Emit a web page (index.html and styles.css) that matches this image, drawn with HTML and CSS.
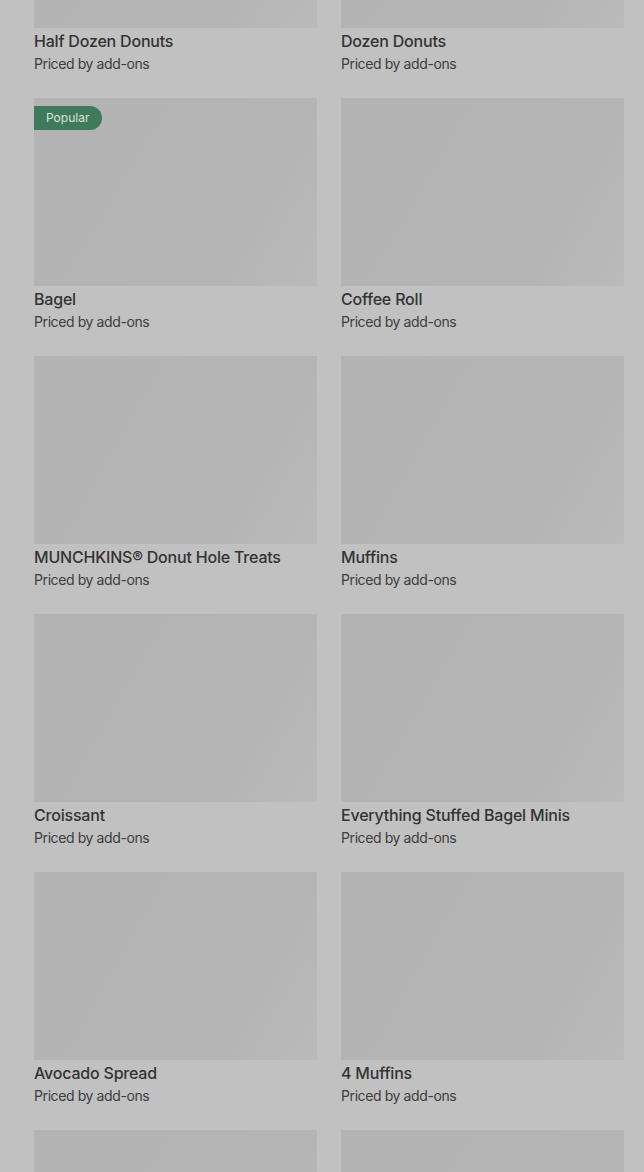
FILE: index.html
```html
<!DOCTYPE html>
<html>
<head>
  <title>Menu</title>
  <link rel="stylesheet" href="styles.css">
</head>
<body>
  <div class="menu">
    <div class="item">
      <div class="thumb"></div>
      <div class="name">Half Dozen Donuts</div>
      <div class="price">Priced by add-ons</div>
    </div>
    <div class="item">
      <div class="thumb"></div>
      <div class="name">Dozen Donuts</div>
      <div class="price">Priced by add-ons</div>
    </div>

    <div class="item">
      <div class="thumb"><span class="badge">Popular</span></div>
      <div class="name">Bagel</div>
      <div class="price">Priced by add-ons</div>
    </div>
    <div class="item">
      <div class="thumb"></div>
      <div class="name">Coffee Roll</div>
      <div class="price">Priced by add-ons</div>
    </div>

    <div class="item">
      <div class="thumb"></div>
      <div class="name">MUNCHKINS® Donut Hole Treats</div>
      <div class="price">Priced by add-ons</div>
    </div>
    <div class="item">
      <div class="thumb"></div>
      <div class="name">Muffins</div>
      <div class="price">Priced by add-ons</div>
    </div>

    <div class="item">
      <div class="thumb"></div>
      <div class="name">Croissant</div>
      <div class="price">Priced by add-ons</div>
    </div>
    <div class="item">
      <div class="thumb"></div>
      <div class="name">Everything Stuffed Bagel Minis</div>
      <div class="price">Priced by add-ons</div>
    </div>

    <div class="item">
      <div class="thumb"></div>
      <div class="name">Avocado Spread</div>
      <div class="price">Priced by add-ons</div>
    </div>
    <div class="item">
      <div class="thumb"></div>
      <div class="name">4 Muffins</div>
      <div class="price">Priced by add-ons</div>
    </div>

    <!-- next row, only the top of the pictures is in view -->
    <div class="item">
      <div class="thumb"></div>
    </div>
    <div class="item">
      <div class="thumb"></div>
    </div>
  </div>
</body>
</html>
```
FILE: styles.css
```css
html, body {
  margin: 0;
  background-color: #c1c1c1;
}

body {
  font-family: Inter, "Noto Sans", Arial, sans-serif;
  color: #333333;
  padding: 0 20px 0 34px;
  height: 1172px;
  overflow: hidden;
}

/* page is scrolled part way down the list */
.menu {
  display: grid;
  grid-template-columns: 283px 283px;
  column-gap: 24px;
  row-gap: 24px;
  margin-top: -160px;
}

.thumb {
  position: relative;
  height: 188px;
  background: linear-gradient(120deg, #b3b3b3 0%, #b4b4b4 70%, #bababa 100%);
}

.badge {
  position: absolute;
  top: 8px;
  left: 0;
  height: 24px;
  line-height: 24px;
  padding: 0 13px 0 12px;
  font-size: 12px;
  color: #d9e6dd;
  background-color: #3f7a5a;
  border-radius: 0 12px 12px 0;
}

.name {
  margin-top: 1px;
  font-size: 16px;
  font-weight: 500;
  line-height: 24px;
  letter-spacing: -0.2px;
  color: #333333;
}

.price {
  margin-top: 1px;
  font-size: 14px;
  line-height: 20px;
  letter-spacing: -0.4px;
  color: #3d3d3d;
}
```
